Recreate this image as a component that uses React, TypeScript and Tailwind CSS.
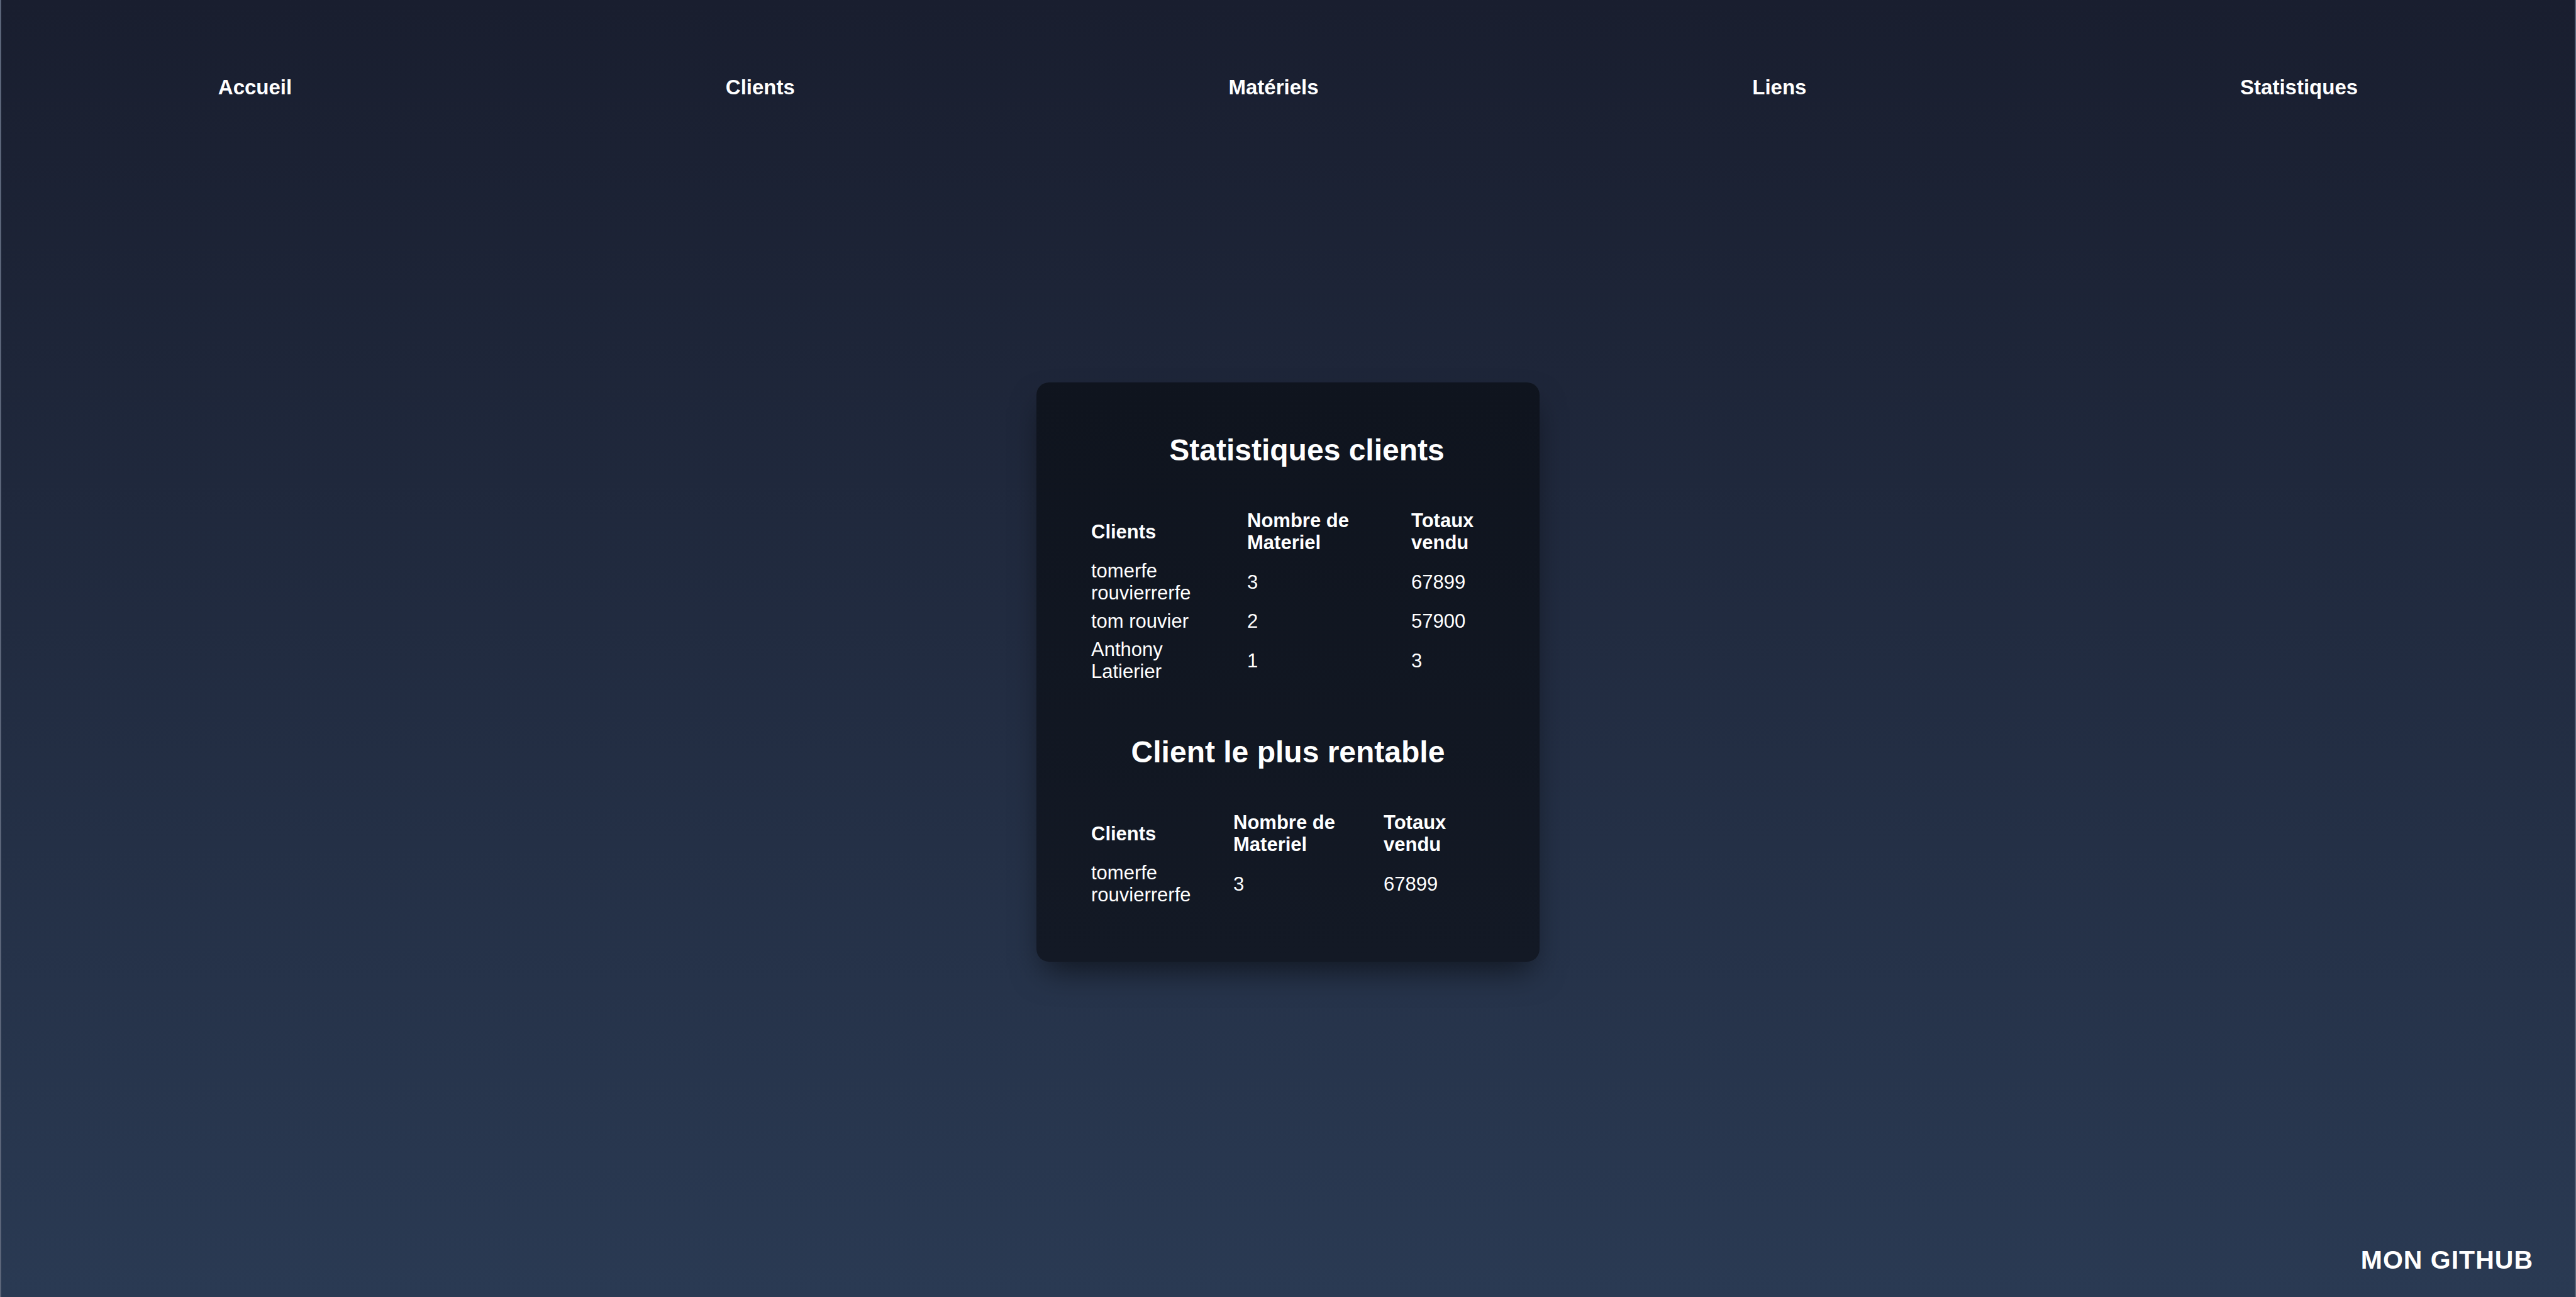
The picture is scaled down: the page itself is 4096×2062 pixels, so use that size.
import React from "react";

type Row = { client: string[]; count: string; total: string };

const allClients: Row[] = [
  { client: ["tomerfe", "rouvierrerfe"], count: "3", total: "67899" },
  { client: ["tom rouvier"], count: "2", total: "57900" },
  { client: ["Anthony", "Latierier"], count: "1", total: "3" },
];

const bestClient: Row[] = [
  { client: ["tomerfe", "rouvierrerfe"], count: "3", total: "67899" },
];

const links = ["Accueil", "Clients", "Matériels", "Liens", "Statistiques"];

const StatsTable = ({
  rows,
  cols,
  width,
}: {
  rows: Row[];
  cols: [string, string];
  width: string;
}) => (
  <table className={`${width} border-collapse text-left text-[31px] leading-[35px]`}>
    <colgroup>
      <col className={cols[0]} />
      <col className={cols[1]} />
      <col />
    </colgroup>
    <thead>
      <tr className="font-bold">
        <th className="py-[5px] align-middle">Clients</th>
        <th className="py-[5px] align-middle">
          Nombre de
          <br />
          Materiel
        </th>
        <th className="py-[5px] align-middle">
          Totaux
          <br />
          vendu
        </th>
      </tr>
    </thead>
    <tbody>
      {rows.map((r, i) => (
        <tr key={i}>
          <td className="py-[5px] align-middle">
            {r.client.map((line, j) => (
              <div key={j}>{line}</div>
            ))}
          </td>
          <td className="py-[5px] align-middle">{r.count}</td>
          <td className="py-[5px] align-middle">{r.total}</td>
        </tr>
      ))}
    </tbody>
  </table>
);

export default function App() {
  return (
    <div
      className="flex h-[2062px] w-full flex-col border-x-2 border-[#5b6579] bg-linear-to-b from-[#191e2f] to-[#2a3a53] text-white"
      style={{ fontFamily: '"Liberation Sans", Arial, sans-serif' }}
    >
      <nav className="flex h-[278px] items-center justify-around">
        {links.map((l) => (
          <a key={l} href="#" className="text-[33px] font-bold">
            {l}
          </a>
        ))}
      </nav>

      <main className="flex justify-center">
        <div className="mt-[330px] flex w-[800px] flex-col items-start rounded-[20px] bg-linear-to-b from-[#0f141e] to-[#131925] pt-[80px] pb-[84px] pl-[87px] shadow-[0_25px_50px_-12px_rgba(0,0,0,0.55)]">
          <section className="flex flex-col items-center">
            <h2 className="text-[48px] leading-[55px] font-bold">Statistiques clients</h2>
            <div className="mt-[62px]">
              <StatsTable rows={allClients} cols={["w-[248px]", "w-[261px]"]} width="w-[686px]" />
            </div>
          </section>

          <section className="mt-[78px] flex flex-col items-center">
            <h2 className="text-[48px] leading-[55px] font-bold">Client le plus rentable</h2>
            <div className="mt-[62px]">
              <StatsTable rows={bestClient} cols={["w-[226px]", "w-[239px]"]} width="w-[626px]" />
            </div>
          </section>
        </div>
      </main>

      <footer className="mt-auto flex justify-end pr-[66px] pb-[28px]">
        <a href="#" className="text-[41px] font-bold tracking-[1px]">
          MON GITHUB
        </a>
      </footer>
    </div>
  );
}
